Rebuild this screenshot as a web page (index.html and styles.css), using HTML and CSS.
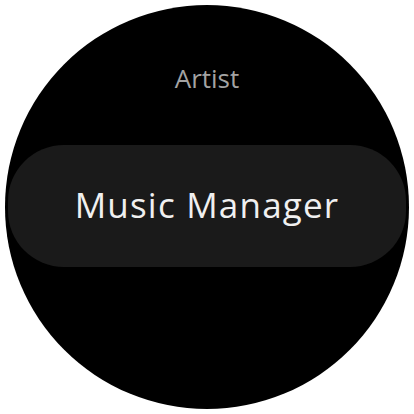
FILE: index.html
```html
<!DOCTYPE html>
<html>
<head>
<meta charset="utf-8">
<link rel="stylesheet" href="styles.css">
</head>
<body>
<div class="screen">
  <div class="watch">
    <div class="label">Artist</div>
    <div class="pill"><span class="title">Music Manager</span></div>
  </div>
</div>
</body>
</html>
```
FILE: styles.css
```css
html, body {
  margin: 0;
  padding: 0;
  background: #ffffff;
}
.screen {
  width: 414px;
  height: 414px;
  display: flex;
  align-items: center;
  justify-content: center;
}
.watch {
  width: 404px;
  height: 404px;
  border-radius: 50%;
  background: #000000;
  overflow: hidden;
  display: flex;
  flex-direction: column;
  align-items: center;
  font-family: "Open Sans", Roboto, sans-serif;
}
.label {
  margin-top: 58px;
  height: 30px;
  line-height: 30px;
  font-size: 26px;
  color: #a3a3a3;
}
.pill {
  margin-top: 52px;
  width: 398px;
  height: 122px;
  border-radius: 56px;
  background: #1a1a1a;
  display: flex;
  align-items: center;
  justify-content: center;
}
.title {
  font-size: 35px;
  letter-spacing: 1.2px;
  color: #f0f0f0;
  line-height: 40px;
  margin-top: -2px;
}
```
